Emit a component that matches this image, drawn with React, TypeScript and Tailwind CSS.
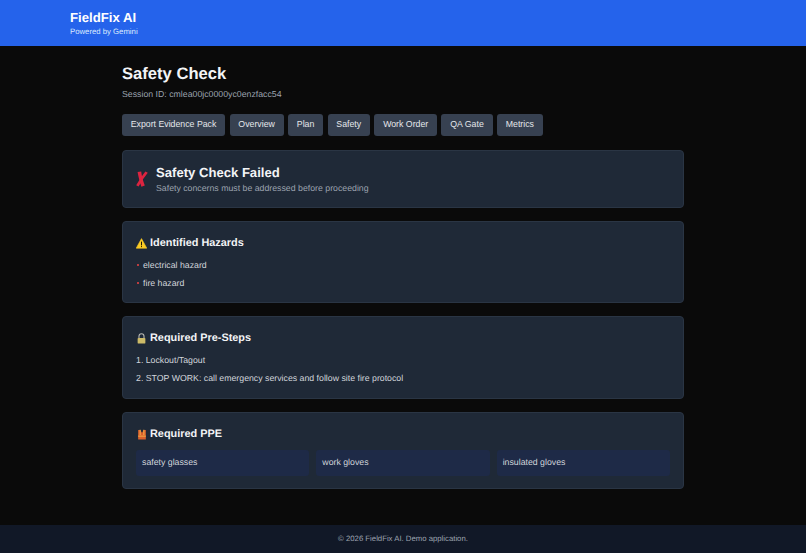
import React from "react";

const tabs = ["Export Evidence Pack", "Overview", "Plan", "Safety", "Work Order", "QA Gate", "Metrics"];
const hazards = ["electrical hazard", "fire hazard"];
const preSteps = ["Lockout/Tagout", "STOP WORK: call emergency services and follow site fire protocol"];
const ppe = ["safety glasses", "work gloves", "insulated gloves"];

function CrossIcon() {
  return (
    <svg width="12" height="16" viewBox="0 0 12 16" className="shrink-0">
      <path d="M1.6 1 L5.2 .4 C5.8 5 7 10 8.8 14.4 L5.4 15.8 C3.8 11 2.4 6 1.6 1 Z" fill="#dc2440" />
      <path d="M9.4 .4 L11.8 1.8 C8.6 6 5.2 10.6 2.6 15.6 L.2 14.2 C3 9.4 6 4.6 9.4 .4 Z" fill="#dc2440" />
    </svg>
  );
}

function WarningIcon() {
  return (
    <svg width="11" height="11" viewBox="0 0 11 11">
      <path d="M5.5 .6 L10.8 10.2 H.2 Z" fill="#fbcb24" stroke="#fbcb24" strokeWidth=".6" strokeLinejoin="round" />
      <rect x="5" y="3.6" width="1" height="3.8" fill="#1f1a08" />
      <rect x="5" y="8.1" width="1" height="1" fill="#1f1a08" />
    </svg>
  );
}

function LockIcon() {
  return (
    <svg width="9" height="11" viewBox="0 0 10 12">
      <path d="M2.2 6 V3.6 a2.8 2.8 0 0 1 5.6 0 V6" fill="none" stroke="#b9b9b4" strokeWidth="1.2" />
      <rect x=".7" y="5.4" width="8.6" height="6.2" rx="1" fill="#cdbb68" />
    </svg>
  );
}

function VestIcon() {
  return (
    <svg width="10" height="11" viewBox="0 0 10 12">
      <path d="M.8 1 H3 L5 4 L7 1 H9.2 V11.4 H.8 Z" fill="#d9602c" />
      <path d="M2.4 .8 H3.6 V6.5 H2.4 Z M6.4 .8 H7.6 V6.5 H6.4 Z" fill="#f0a848" />
      <path d="M.8 7.2 H9.2 V8.4 H.8 Z" fill="#f0a848" />
    </svg>
  );
}

function Card({ children, className }: { children: React.ReactNode; className: string }) {
  return (
    <section className={`rounded-[4px] border border-[#2a3544] bg-[#1f2937] ${className}`}>
      {children}
    </section>
  );
}

function CardTitle({ icon, title }: { icon: React.ReactNode; title: string }) {
  return (
    <h2 className="flex h-[14px] items-center gap-[3px] text-[10.9px] font-bold text-[#f3f4f6]">
      <span className="flex w-[11px] shrink-0 justify-center">{icon}</span>
      {title}
    </h2>
  );
}

export default function App() {
  return (
    <div className="flex min-h-[553px] flex-col bg-[#0a0a0a] font-['Liberation_Sans',Arial,sans-serif] text-[#f3f4f6] [text-rendering:geometricPrecision]">
      <header className="flex h-[46px] flex-col justify-center bg-[#2563eb] pl-[70px]">
        <h1 className="text-[13.2px] leading-[17px] font-bold text-white">FieldFix AI</h1>
        <p className="text-[7.75px] leading-[11px] text-[#dbeafe]">Powered by Gemini</p>
      </header>

      <main className="mx-auto flex w-[562px] flex-1 flex-col pt-[18px]">
        <h1 className="text-[16.6px] leading-[20px] font-bold text-[#f3f4f6]">Safety Check</h1>
        <p className="mt-[4px] text-[8.75px] leading-[12px] text-[#9ca3af]">Session ID: cmlea00jc0000yc0enzfacc54</p>

        <nav className="mt-[14px] flex gap-[4.5px]">
          {tabs.map((tab) => (
            <button
              key={tab}
              className="flex h-[22px] items-center rounded-[3px] bg-[#374151] px-[8.75px] text-[8.75px] text-[#e5e7eb]"
            >
              {tab}
            </button>
          ))}
        </nav>

        <div className="mt-[14px] flex flex-col gap-[13px]">
          <Card className="flex h-[58px] items-center gap-[8px] pl-[13px]">
            <CrossIcon />
            <div>
              <h2 className="text-[13.1px] leading-[15px] font-bold text-[#f3f4f6]">Safety Check Failed</h2>
              <p className="mt-[2px] text-[8.75px] leading-[12px] text-[#9ca3af]">
                Safety concerns must be addressed before proceeding
              </p>
            </div>
          </Card>

          <Card className="h-[82px] px-[13px] pt-[14px]">
            <CardTitle icon={<WarningIcon />} title="Identified Hazards" />
            <ul className="mt-[9px] flex flex-col gap-[5.5px]">
              {hazards.map((hazard) => (
                <li key={hazard} className="flex items-center text-[8.75px] leading-[12px] text-[#d1d5db]">
                  <span className="mr-[4px] ml-[1px] h-[2px] w-[2px] rounded-full bg-[#ef4444]" />
                  {hazard}
                </li>
              ))}
            </ul>
          </Card>

          <Card className="h-[83px] px-[13px] pt-[14px]">
            <CardTitle icon={<LockIcon />} title="Required Pre-Steps" />
            <ol className="mt-[9px] flex flex-col gap-[5.5px]">
              {preSteps.map((step, index) => (
                <li key={step} className="text-[8.75px] leading-[12px] text-[#d1d5db]">
                  {index + 1}. {step}
                </li>
              ))}
            </ol>
          </Card>

          <Card className="h-[77px] px-[13px] pt-[14px]">
            <CardTitle icon={<VestIcon />} title="Required PPE" />
            <div className="mt-[9px] grid grid-cols-3 gap-[7px]">
              {ppe.map((item) => (
                <div
                  key={item}
                  className="flex h-[26px] items-center rounded-[3px] bg-[#1e2a47] px-[6px] text-[8.75px] text-[#d1d5db]"
                >
                  {item}
                </div>
              ))}
            </div>
          </Card>
        </div>
      </main>

      <footer className="flex h-[28px] items-center justify-center bg-[#111827] text-[7.75px] text-[#9ca3af]">
        © 2026 FieldFix AI. Demo application.
      </footer>
    </div>
  );
}
